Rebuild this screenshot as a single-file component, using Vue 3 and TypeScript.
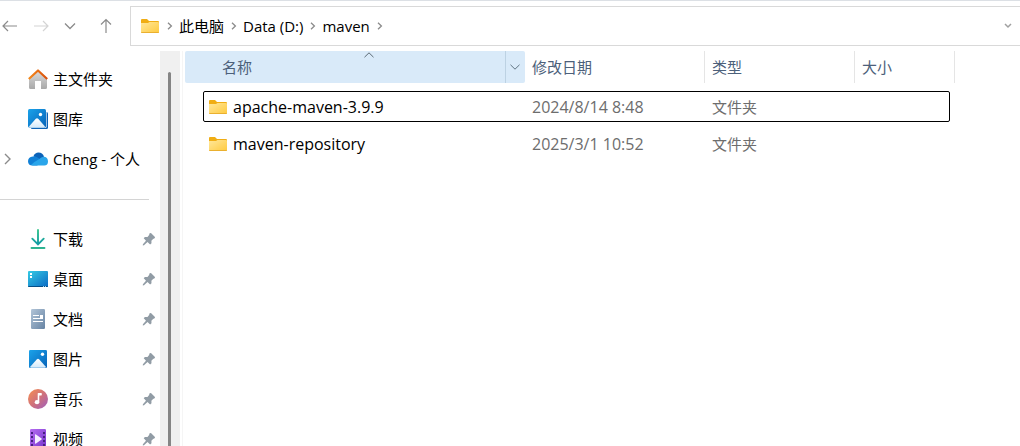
<script setup lang="ts">
import { ref } from 'vue'

interface Place {
  id: string
  label: string
}

interface Entry {
  name: string
  modified: string
  kind: string
}

const crumbs: string[] = ['此电脑', 'Data (D:)', 'maven']

const roots: Place[] = [
  { id: 'home', label: '主文件夹' },
  { id: 'gallery', label: '图库' },
  { id: 'cloud', label: 'Cheng - 个人' },
]

const pinned: Place[] = [
  { id: 'downloads', label: '下载' },
  { id: 'desktop', label: '桌面' },
  { id: 'documents', label: '文档' },
  { id: 'pictures', label: '图片' },
  { id: 'music', label: '音乐' },
  { id: 'videos', label: '视频' },
]

const entries: Entry[] = [
  { name: 'apache-maven-3.9.9', modified: '2024/8/14 8:48', kind: '文件夹' },
  { name: 'maven-repository', modified: '2025/3/1 10:52', kind: '文件夹' },
]

const focused = ref(0)
</script>

<template>
  <div class="explorer">
    <svg class="defs" width="0" height="0" aria-hidden="true">
      <defs>
        <linearGradient id="gFolder" x1="0" y1="0" x2="1" y2="1">
          <stop offset="0" stop-color="#ffe79b" /><stop offset="1" stop-color="#ffca3e" />
        </linearGradient>
        <linearGradient id="gWall" x1="0" y1="0" x2="0" y2="1">
          <stop offset="0" stop-color="#dedede" /><stop offset="1" stop-color="#a9a9a9" />
        </linearGradient>
        <linearGradient id="gRoof" x1="0" y1="0" x2="1" y2="0">
          <stop offset="0" stop-color="#f58a1c" /><stop offset="1" stop-color="#d94f0b" />
        </linearGradient>
        <linearGradient id="gBlue" x1="0" y1="0" x2="1" y2="1">
          <stop offset="0" stop-color="#1ba3ea" /><stop offset="1" stop-color="#0662b8" />
        </linearGradient>
        <linearGradient id="gHill" x1="0" y1="0" x2="0" y2="1">
          <stop offset="0" stop-color="#ffffff" /><stop offset="1" stop-color="#d3e9fa" />
        </linearGradient>
        <linearGradient id="gDown" x1="0" y1="0" x2="0" y2="20" gradientUnits="userSpaceOnUse">
          <stop offset="0" stop-color="#36c78b" /><stop offset="0.75" stop-color="#119aa4" /><stop offset="1" stop-color="#35b98c" />
        </linearGradient>
        <linearGradient id="gDesk" x1="0" y1="0" x2="1" y2="1">
          <stop offset="0" stop-color="#35cbe4" /><stop offset="1" stop-color="#0a69c4" />
        </linearGradient>
        <linearGradient id="gDoc" x1="0" y1="0" x2="1" y2="1">
          <stop offset="0" stop-color="#b2c5d8" /><stop offset="1" stop-color="#6683a3" />
        </linearGradient>
        <linearGradient id="gMusic" x1="0" y1="0" x2="1" y2="1">
          <stop offset="0.1" stop-color="#f08a58" /><stop offset="0.55" stop-color="#cc6f80" /><stop offset="1" stop-color="#9d5fc0" />
        </linearGradient>
        <linearGradient id="gVideo" x1="0" y1="0" x2="1" y2="1">
          <stop offset="0" stop-color="#b56cf0" /><stop offset="1" stop-color="#7635cc" />
        </linearGradient>
        <symbol id="folder" viewBox="0 0 18 14">
          <path d="M0 1q0-1 1-1h5l2 2h9q1 0 1 1v5H0z" fill="#f0ad14" />
          <path d="M0 4h7l1.5-1H17q1 0 1 1v9q0 1-1 1H1q-1 0-1-1z" fill="url(#gFolder)" />
          <path d="M0 13h18q0 1-1 1H1q-1 0-1-1z" fill="#eab02f" />
        </symbol>
        <symbol id="next" viewBox="0 0 6 8">
          <path d="M1 .8L4.4 4 1 7.2" fill="none" stroke="currentColor" stroke-width="1.3" />
        </symbol>
        <symbol id="pin" viewBox="0 0 14 14">
          <path d="M7.600 1.300q.8-.8 1.600 0l3.500 3.500q.7.800-.1 1.500l-1.500.7-1.700 1.800.1 2.500-1.400 1.200-2.600-2.400L2 13.300l-1.200.1.100-1.200 3.100-3.400L1.700 6.300l1.200-1.400 2.600.1 1.600-1.900z" fill="#919ca5" />
        </symbol>
      </defs>
    </svg>

    <header class="toolbar">
      <nav class="history" aria-label="导航">
        <button type="button" aria-label="后退">
          <svg width="16" height="14" viewBox="0 0 16 14"><path d="M16 7H2M7 2L2 7l5 5" fill="none" stroke="#8b8b8b" stroke-width="1.2" /></svg>
        </button>
        <button type="button" aria-label="前进" disabled>
          <svg width="16" height="14" viewBox="0 0 16 14"><path d="M0 7h14M9 2l5 5-5 5" fill="none" stroke="#d4d4d4" stroke-width="1.2" /></svg>
        </button>
        <button type="button" aria-label="最近的位置">
          <svg width="12" height="8" viewBox="0 0 12 8"><path d="M1 1.500l5 5 5-5" fill="none" stroke="#8b8b8b" stroke-width="1.3" /></svg>
        </button>
        <button type="button" class="up" aria-label="向上">
          <svg width="12" height="16" viewBox="0 0 12 16"><path d="M6 15V1.500M1 6.500l5-5 5 5" fill="none" stroke="#8b8b8b" stroke-width="1.2" /></svg>
        </button>
      </nav>
      <div class="address">
        <svg class="folder" width="18" height="14"><use href="#folder" /></svg>
        <svg class="next" width="6" height="8"><use href="#next" /></svg>
        <template v-for="crumb in crumbs" :key="crumb">
          <button type="button" class="crumb">{{ crumb }}</button>
          <svg class="next" width="6" height="8"><use href="#next" /></svg>
        </template>
        <button type="button" class="history-toggle" aria-label="以前的位置">
          <svg width="8" height="6" viewBox="0 0 8 6"><path d="M1 1l3 3 3-3" fill="none" stroke="#a0a0a0" stroke-width="1.5" /></svg>
        </button>
      </div>
    </header>

    <div class="body">
      <aside class="sidebar">
        <ul class="places">
          <li v-for="place in roots" :key="place.id">
            <a href="#" class="place" @click.prevent>
              <span class="expander">
                <svg v-if="place.id === 'cloud'" width="8" height="12" viewBox="0 0 8 12"><path d="M1 1l5 5-5 5" fill="none" stroke="#8b8b8b" stroke-width="1.4" /></svg>
              </span>
              <svg class="icon" width="20" height="20" viewBox="0 0 20 20" aria-hidden="true">
                <g v-if="place.id === 'home'">
                  <path d="M1 9l9-8 9 8v9.500q0 1.500-1.500 1.500H13v-8H7v8H2.500Q1 20 1 18.500z" fill="url(#gWall)" />
                  <path d="M.8 10L10 1.500 19.200 10" fill="none" stroke="url(#gRoof)" stroke-width="2.2" stroke-linejoin="round" />
                </g>
                <g v-else-if="place.id === 'gallery'">
                  <path d="M4 3h14.500Q20 3 20 4.500v14q0 1.500-1.500 1.500h-14Q3 20 2.500 18.500z" fill="#0b61b5" />
                  <rect width="18.600" height="19" rx="1.5" fill="#fff" />
                  <rect width="18" height="18.500" rx="1.5" fill="url(#gBlue)" />
                  <path d="M1 17.500l6.800-7.700q1.200-1.200 2.400 0l6.800 7.700q-.5 1-1.500 1h-13q-1 0-1.500-1z" fill="url(#gHill)" />
                  <circle cx="12.500" cy="5.500" r="1.700" fill="#fff" />
                </g>
                <g v-else>
                  <path d="M5.500 7Q7 3.500 10.500 3.500q4 0 5.500 4l-5 5z" fill="#0b62b8" />
                  <path d="M4.500 16.500Q0 16.500 0 12.300 0 8 4.800 7.500q2.700-.8 5.200 1.300l6 4.200-7 3.500z" fill="#1180d6" />
                  <path d="M3 16q3.500-3.500 8-5.700 2.500-3 5.300-2.600Q20 8.500 20 12.500q0 4-3.800 4H5z" fill="#2aa5ea" />
                </g>
              </svg>
              <span class="label">{{ place.label }}</span>
            </a>
          </li>
        </ul>
        <hr class="divider" />
        <ul class="places">
          <li v-for="place in pinned" :key="place.id">
            <a href="#" class="place" @click.prevent>
              <span class="expander"></span>
              <svg class="icon" width="20" height="20" viewBox="0 0 20 20" aria-hidden="true">
                <g v-if="place.id === 'downloads'">
                  <path d="M10 1v14M4.300 9.700l5.700 5.700 5.700-5.700M3.500 19h13" fill="none" stroke="url(#gDown)" stroke-width="1.9" stroke-linecap="round" />
                </g>
                <g v-else-if="place.id === 'desktop'">
                  <rect y="2" width="20" height="16" rx="1" fill="url(#gDesk)" />
                  <path d="M0 17h20q0 1-1 1H1q-1 0-1-1z" fill="#064e86" />
                  <path d="M2 4h2v2H2zM2 7h2v2H2z" fill="#fff" />
                  <path d="M15 17h1v1h-1zM17 17h1v1h-1z" fill="#9bd4f3" />
                </g>
                <g v-else-if="place.id === 'documents'">
                  <rect x="3" width="14" height="20" rx="1.2" fill="url(#gDoc)" />
                  <path d="M5 6.500h6M5 9.500h10M5 12.500h10" stroke="#fff" stroke-width="1.2" />
                  <rect x="12" y="6" width="3" height="3" fill="#fff" />
                </g>
                <g v-else-if="place.id === 'pictures'">
                  <rect x="1" y="1" width="18" height="18" rx="1.3" fill="url(#gBlue)" />
                  <path d="M2 18l6.700-7.500q1.300-1.300 2.600 0L18 18q-.5.700-1 .7H3q-.6 0-1-.7z" fill="url(#gHill)" />
                  <circle cx="14.500" cy="5.300" r="1.700" fill="#fff" />
                </g>
                <g v-else-if="place.id === 'music'">
                  <circle cx="10" cy="10" r="10" fill="url(#gMusic)" />
                  <ellipse cx="9" cy="13.200" rx="2.300" ry="2.100" fill="#fff" />
                  <path d="M9.700 4.500q0-.5.600-.5h2.900q.6 0 .6.600v1.200q0 .6-.6.600h-1.900v6.800H9.700z" fill="#fff" />
                </g>
                <g v-else>
                  <rect x="2" width="16" height="20" rx="1.2" fill="url(#gVideo)" />
                  <path d="M3 3h2v2H3zM3 7h2v2H3zM3 11h2v2H3zM3 15h2v2H3zM15 3h2v2h-2zM15 7h2v2h-2zM15 11h2v2h-2zM15 15h2v2h-2z" fill="#472080" />
                  <path d="M7 5.700v8.600q0 .7.600.4l6-4.200q.5-.5 0-1l-6-4.200q-.6-.3-.6.400z" fill="#f5edff" />
                </g>
              </svg>
              <span class="label">{{ place.label }}</span>
              <svg class="pin" width="14" height="14" aria-hidden="true"><use href="#pin" /></svg>
            </a>
          </li>
        </ul>
      </aside>
      <div class="scrollbar"><div class="thumb"></div></div>

      <main class="content">
        <table class="files">
          <colgroup>
            <col class="col-name" /><col class="col-date" /><col class="col-kind" /><col class="col-size" />
          </colgroup>
          <thead>
            <tr>
              <th scope="col">
                <div class="head sorted">
                  <span class="title">名称</span>
                  <svg class="sort" width="10" height="6" viewBox="0 0 10 6"><path d="M.5 5.200L5 .8l4.500 4.400" fill="none" stroke="#5c6a75" /></svg>
                  <button type="button" class="filter" aria-label="筛选">
                    <svg width="10" height="6" viewBox="0 0 10 6"><path d="M.5.8L5 5.200 9.500.8" fill="none" stroke="#5f7482" /></svg>
                  </button>
                </div>
              </th>
              <th scope="col"><div class="head">修改日期</div></th>
              <th scope="col"><div class="head">类型</div></th>
              <th scope="col"><div class="head">大小</div></th>
            </tr>
          </thead>
          <tbody>
            <tr v-for="(entry, i) in entries" :key="entry.name" :class="{ focused: i === focused }" @click="focused = i">
              <td>
                <div class="name">
                  <svg class="folder" width="18" height="14"><use href="#folder" /></svg>
                  <span>{{ entry.name }}</span>
                </div>
              </td>
              <td class="modified">{{ entry.modified }}</td>
              <td>{{ entry.kind }}</td>
              <td></td>
            </tr>
          </tbody>
        </table>
      </main>
    </div>
  </div>
</template>

<style>
body {
  margin: 0;
  background: #fff;
}
</style>

<style scoped>
.explorer {
  display: flex;
  flex-direction: column;
  height: 100vh;
  box-sizing: border-box;
  overflow: hidden;
  border-top: 1px solid #dce0e5;
  background: #fff;
  color: #000;
  font: 15px/20px "Open Sans", "Noto Sans CJK SC", sans-serif;
}
.defs {
  position: absolute;
}
svg {
  display: block;
  flex: none;
}
button {
  display: flex;
  align-items: center;
  justify-content: center;
  margin: 0;
  padding: 0;
  border: 0;
  background: none;
  color: inherit;
  font: inherit;
}
.toolbar {
  display: flex;
  flex: none;
  padding: 5px 0;
}
.history {
  display: flex;
  align-items: center;
  width: 130px;
}
.history button {
  width: 28px;
  height: 32px;
  flex: none;
}
.history button:first-child {
  padding-right: 10px;
  box-sizing: border-box;
}
.history .up {
  margin-left: 4px;
  width: 36px;
}
.address {
  display: flex;
  flex: 1;
  align-items: center;
  box-sizing: border-box;
  height: 40px;
  padding: 0 8px 0 10px;
  border: 1px solid #d9d9d9;
  border-right: 0;
}
.next {
  margin: 0 6px 0 8px;
  color: #8b8b8b;
}
.crumb {
  white-space: nowrap;
}
.crumb + .next {
  margin: 0 6px 0 7px;
}
.history-toggle {
  margin-left: auto;
}
.body {
  display: flex;
  flex: 1;
  min-height: 0;
}
.sidebar {
  width: 160px;
  flex: none;
  box-sizing: border-box;
  padding-top: 8px;
  overflow: hidden;
}
.places {
  margin: 0;
  padding: 0;
  list-style: none;
}
.place {
  display: flex;
  align-items: center;
  height: 40px;
  padding-right: 4px;
  color: inherit;
  text-decoration: none;
  white-space: nowrap;
}
.expander {
  width: 24px;
  padding-left: 4px;
  flex: none;
}
.label {
  margin-left: 5px;
}
.pin {
  margin-left: auto;
}
.divider {
  margin: 20px 11px 19px 0;
  border: 0;
  border-top: 1px solid #d4d4d4;
}
.scrollbar {
  width: 20px;
  flex: none;
  box-sizing: border-box;
  padding: 21px 9px 0 8px;
  background: #f0f0f0;
}
.thumb {
  height: 100%;
  border-radius: 2px 2px 0 0;
  background: #858585;
}
.content {
  flex: 1;
  min-width: 0;
  margin-left: 2px;
  padding-left: 2px;
  border-left: 1px solid #f5f5f5;
}
.files {
  width: 770px;
  table-layout: fixed;
  border-collapse: collapse;
}
.col-name {
  width: 340px;
}
.col-date {
  width: 180px;
}
.col-kind {
  width: 150px;
}
.col-size {
  width: 100px;
}
th {
  padding: 0 0 5px;
  color: #4c607a;
  font-weight: 400;
  text-align: left;
}
.head {
  display: flex;
  align-items: center;
  box-sizing: border-box;
  height: 32px;
  padding-left: 7px;
  border-right: 1px solid #e5e5e5;
}
.sorted {
  position: relative;
  padding-left: 37px;
  border-right: 0;
  border-radius: 2px;
  background: #d9eaf9;
}
.sort {
  position: absolute;
  top: 1px;
  left: calc(50% + 9px);
}
.filter {
  width: 20px;
  height: 32px;
  box-sizing: border-box;
  margin-left: auto;
  padding-right: 2px;
  border-left: 1px solid #bdd2e3;
}
tbody tr {
  position: relative;
  height: 37px;
}
td {
  padding: 0 0 0 7px;
  color: #6d6d6d;
  white-space: nowrap;
}
td:first-child {
  padding-left: 24px;
  color: #000;
}
.name {
  display: flex;
  align-items: center;
  gap: 6px;
}
.name,
.modified {
  font-size: 16px;
}
.focused::after {
  content: "";
  position: absolute;
  inset: 3px 5px 3px 18px;
  border: 1px solid #000;
  border-radius: 2px;
  pointer-events: none;
}
</style>
